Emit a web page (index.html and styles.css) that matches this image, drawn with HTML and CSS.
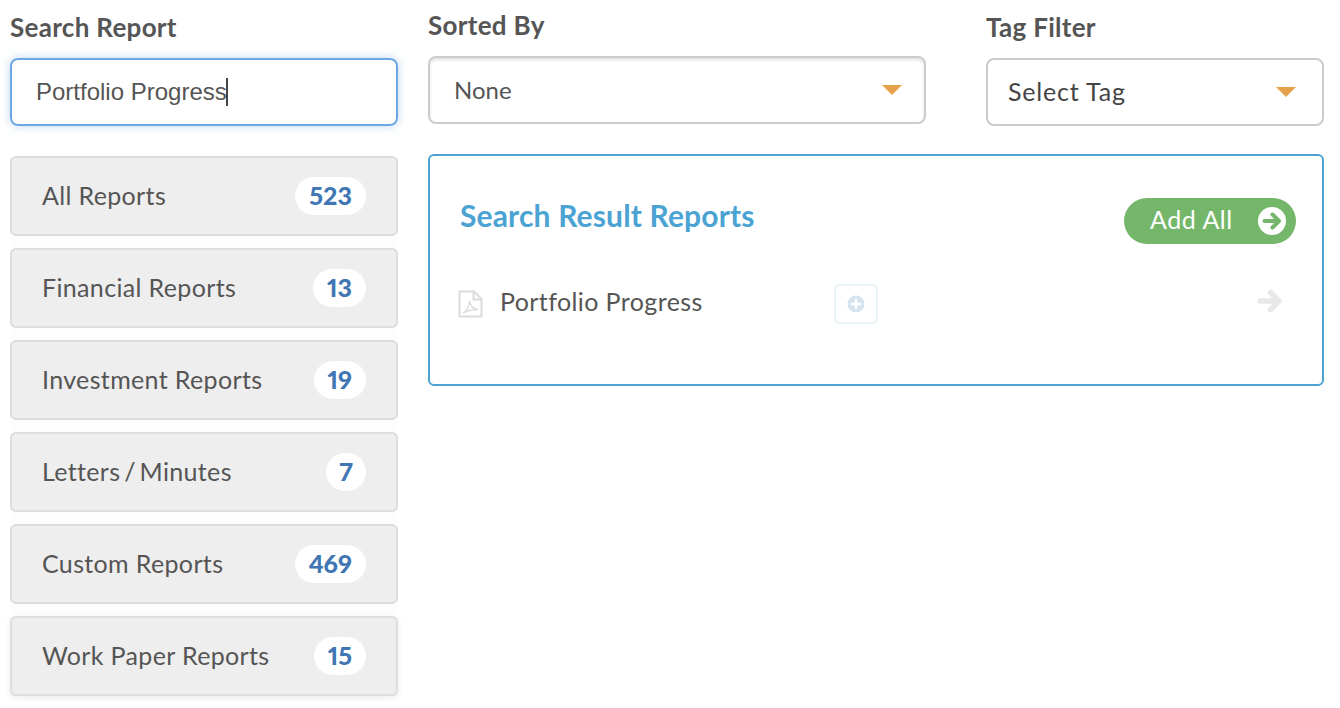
FILE: index.html
```html
<!DOCTYPE html>
<html lang="en">
<head>
<meta charset="utf-8">
<title>Reports</title>
<link rel="stylesheet" href="styles.css">
</head>
<body>
<div class="page">
  <aside class="side">
    <div class="field-label">Search Report</div>
    <div class="search"><span class="search-text">Portfolio Progress</span><span class="caret"></span></div>
    <ul class="cats">
      <li class="cat"><span class="cat-name">All Reports</span><span class="badge">523</span></li>
      <li class="cat"><span class="cat-name">Financial Reports</span><span class="badge">13</span></li>
      <li class="cat"><span class="cat-name">Investment Reports</span><span class="badge">19</span></li>
      <li class="cat"><span class="cat-name cat-name-tight">Letters / Minutes</span><span class="badge badge-single">7</span></li>
      <li class="cat"><span class="cat-name">Custom Reports</span><span class="badge">469</span></li>
      <li class="cat"><span class="cat-name">Work Paper Reports</span><span class="badge">15</span></li>
    </ul>
  </aside>
  <main class="main">
    <div class="filters">
      <div class="filter filter-sort">
        <div class="field-label">Sorted By</div>
        <div class="select select-sort"><span class="select-text">None</span><span class="tri"></span></div>
      </div>
      <div class="filter filter-tag">
        <div class="field-label">Tag Filter</div>
        <div class="select select-tag"><span class="select-text">Select Tag</span><span class="tri"></span></div>
      </div>
    </div>
    <section class="panel">
      <div class="panel-head">
        <h2 class="panel-title">Search Result Reports</h2>
        <button class="add-all"><span class="add-text">Add All</span>
          <svg class="add-icon" width="28" height="28" viewBox="0 0 28 28"><circle cx="14" cy="14" r="14" fill="#fff"/><path d="M6.500 14H20M14.500 7.500L21 14l-6.500 6.500" fill="none" stroke="#75b76a" stroke-width="4" stroke-linecap="round" stroke-linejoin="round"/></svg>
        </button>
      </div>
      <div class="row">
        <svg class="pdf" width="25" height="28" viewBox="0 0 25 28"><path d="M1.500 1.500H16L23.500 9V26.500H1.500Z" fill="#fff" stroke="#dcdcdc" stroke-width="2"/><path d="M15.500 1.500V9.500H23.500" fill="none" stroke="#dcdcdc" stroke-width="2"/><path d="M5 23c4-2 6-7 6.500-12 1 5 3.500 8 8.500 8.500-5 0-10 1-15 3.500z" fill="none" stroke="#dcdcdc" stroke-width="1.300"/></svg>
        <span class="row-name">Portfolio Progress</span>
        <span class="plus"><svg width="18" height="18" viewBox="0 0 18 18"><circle cx="9" cy="9" r="8.500" fill="#d5e5f0"/><path d="M9 5v8M5 9h8" stroke="#fff" stroke-width="2.500" stroke-linecap="round"/></svg></span>
        <svg class="go" width="26" height="28" viewBox="0 0 26 28"><path d="M3 14H21M13.500 5.500L22 14l-8.500 8.500" fill="none" stroke="#e8e8e8" stroke-width="5.500" stroke-linecap="round" stroke-linejoin="round"/></svg>
      </div>
    </section>
  </main>
</div>
</body>
</html>
```

FILE: styles.css
```css
* { box-sizing: border-box; }
html, body { margin: 0; padding: 0; background: #fff; }
body { font-family: "Lato", "Liberation Sans", sans-serif; color: #555; overflow: hidden; height: 708px; }
.page { display: flex; gap: 30px; padding: 0 16px 0 10px; }
.side { width: 388px; flex: none; }
.main { flex: 1; min-width: 0; }
.field-label { font-size: 26px; font-weight: 700; line-height: 30px; letter-spacing: .3px; color: #555; }
.side > .field-label { margin-top: 12px; }
.search { margin-top: 16px; height: 68px; border: 2px solid #6ea8e0; border-radius: 8px; box-shadow: 0 0 10px rgba(110,168,224,.45); display: flex; align-items: center; padding-left: 24px; font-family: "Liberation Sans", sans-serif; font-size: 24px; color: #555; }
.caret { width: 2px; height: 28px; background: #444; margin-left: -1px; }
.cats { list-style: none; margin: 30px 0 0; padding: 0; display: flex; flex-direction: column; gap: 12px; background: #fdfdfd; }
.cat { height: 80px; background: #eee; border: 2px solid #ddd; border-radius: 6px; display: flex; align-items: center; justify-content: space-between; padding: 0 30px; font-size: 25px; color: #555; }
.cat:last-child { box-shadow: 0 2px 6px rgba(0,0,0,.08); }
.cat-name { letter-spacing: .35px; margin-bottom: 2px; }
.cat-name-tight { word-spacing: -3px; }
.badge { min-width: 52px; height: 38px; padding: 0 14px; background: #fff; border-radius: 19px; color: #3f76b3; font-weight: 900; font-size: 25px; line-height: 36px; text-align: center; font-variant-numeric: proportional-nums; }
.badge-single { min-width: 40px; padding: 0 12px; }
.filters { display: flex; gap: 60px; height: 154px; }
.filter-sort { width: 498px; padding-top: 10px; }
.filter-tag { flex: 1; padding-top: 12px; }
.select { margin-top: 16px; height: 68px; border: 2px solid #ccc; border-radius: 8px; background: #fff; display: flex; align-items: center; justify-content: space-between; font-size: 25px; }
.select-text { margin-bottom: 2px; }
.select-sort { padding: 0 22px 0 24px; color: #555; font-size: 24px; box-shadow: inset 0 2px 3px rgba(0,0,0,.12); }
.select-tag { padding: 0 26px 0 20px; color: #444; letter-spacing: .8px; }
.tri { width: 0; height: 0; border-left: 10px solid transparent; border-right: 10px solid transparent; border-top: 10px solid #e6a24a; }
.panel { height: 232px; border: 2px solid #4ba3d3; border-radius: 6px; padding: 0 26px 0 30px; }
.panel-head { display: flex; justify-content: space-between; align-items: flex-start; padding-top: 40px; }
.panel-title { margin: 0; font-size: 30px; font-weight: 700; line-height: 38px; letter-spacing: .15px; color: #4ba3d3; }
.add-all { margin-top: 2px; width: 172px; height: 46px; border: 0; border-radius: 23px; background: #75b76a; color: #fff; font-family: inherit; font-size: 25px; display: flex; align-items: center; justify-content: space-between; padding: 0 10px 0 26px; }
.add-text { letter-spacing: .55px; margin-bottom: 4px; }
.add-icon { flex: none; margin-bottom: 1px; }
.row { display: flex; align-items: center; margin-top: 40px; margin-left: -2px; height: 40px; }
.pdf { flex: none; }
.row-name { font-size: 25px; color: #555; margin-left: 17px; width: 334px; letter-spacing: .4px; margin-bottom: 6px; }
.plus { width: 44px; height: 40px; border: 2px solid #e8f3fa; border-radius: 6px; display: flex; align-items: center; justify-content: center; }
.go { margin-left: auto; margin-right: 13px; margin-top: -6px; }
```
